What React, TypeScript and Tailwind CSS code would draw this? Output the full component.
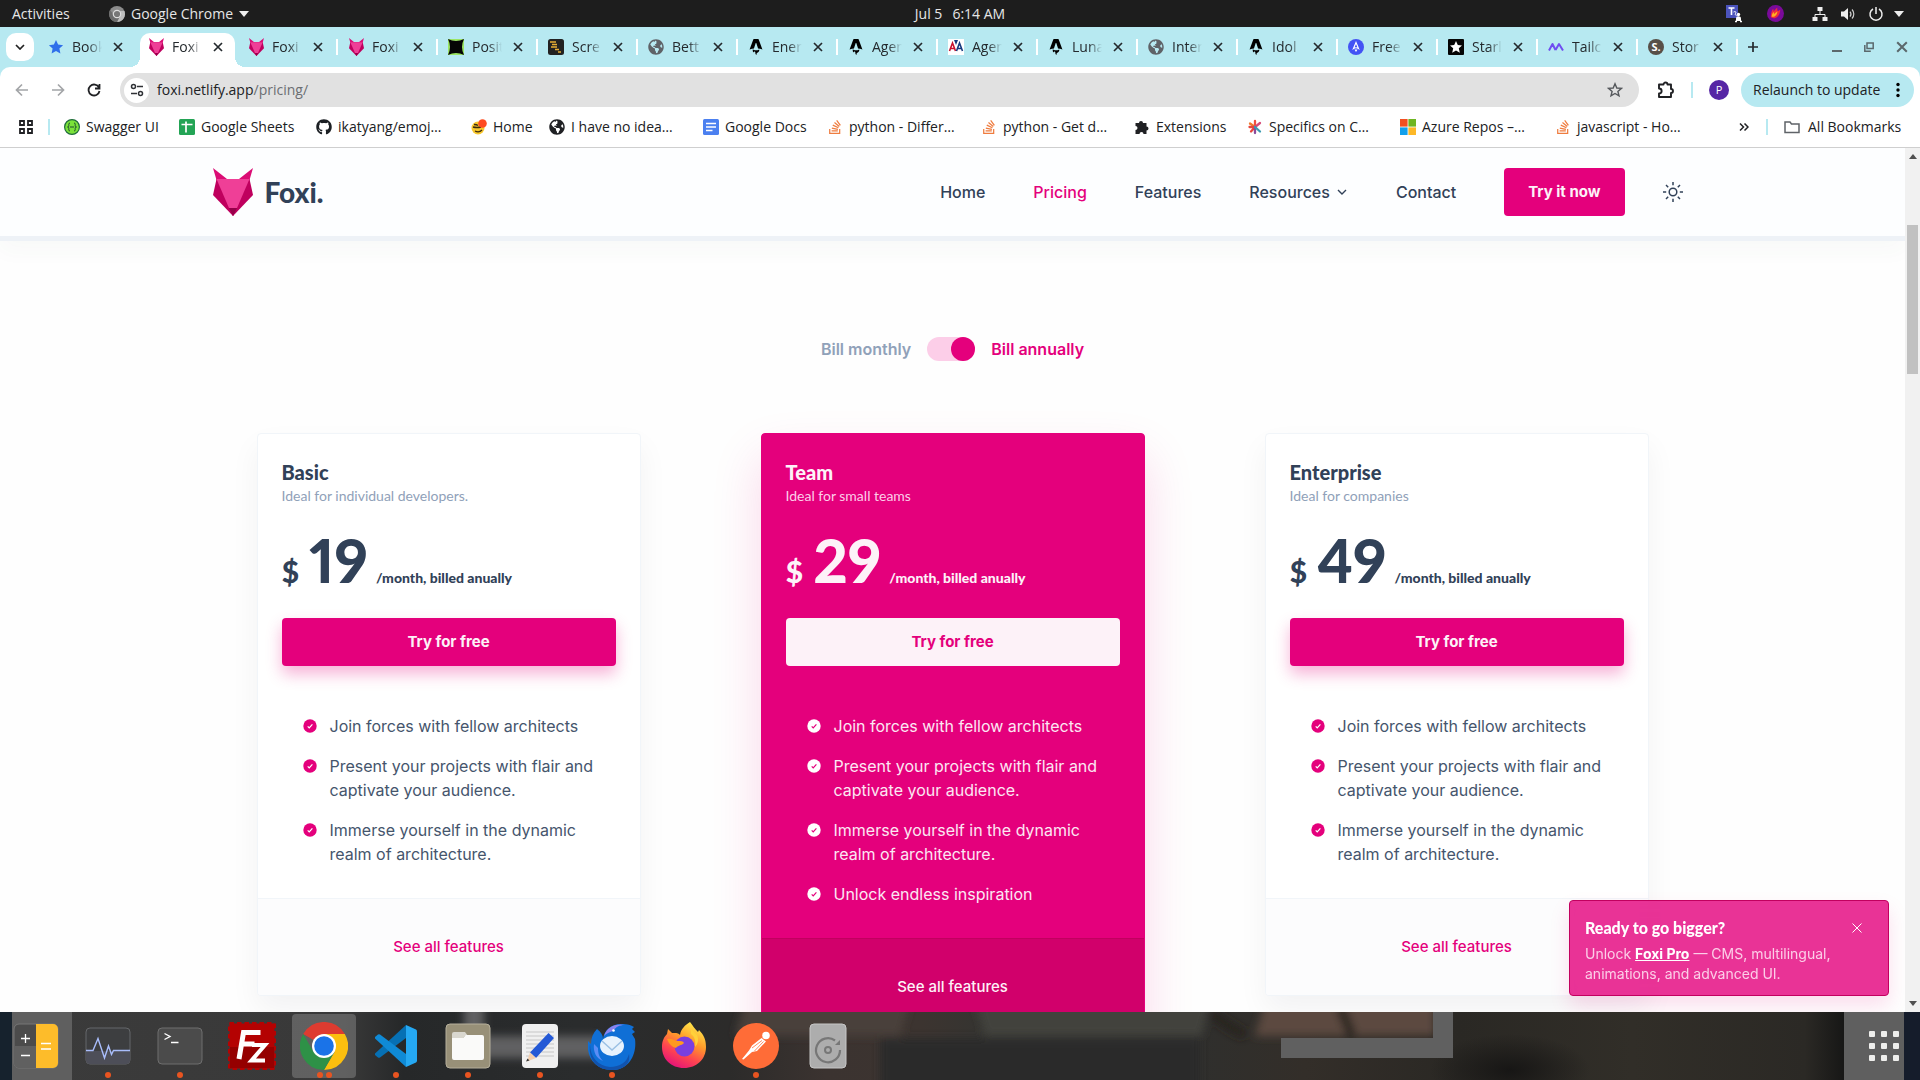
import React, { useState } from "react";
import { FaGithub, FaGlobeAmericas } from "react-icons/fa";
import { SiAstro, SiStackoverflow } from "react-icons/si";

type IconProps = { className?: string };

const headingFont = "font-['Lato',sans-serif]";

/* ---------- Brand ---------- */

function FoxLogo({ className }: IconProps) {
  return (
    <svg viewBox="0 0 40 48" className={className} aria-hidden="true">
      <path d="M0 0 L14 11 H26 L40 0 L36.500 12 L20 48 L3.500 12Z" fill="#db0d75" />
      <path d="M3.500 11 L0 27 L20 48 L40 27 L36.500 11Z" fill="#bf005e" />
      <path d="M3.500 11 H36.500 L24 40 H16Z" fill="#ef3f97" />
      <path d="M16 40 H24 L20 48Z" fill="#97004a" />
    </svg>
  );
}

/* ---------- Desktop top bar ---------- */

function TopBar() {
  return (
    <header className="grid h-[27px] shrink-0 grid-cols-3 items-center bg-[#1d1d1d] px-3 font-['Open_Sans',sans-serif] text-sm text-[#e6e6e6]">
      <div className="flex items-center">
        <button type="button" className="w-[97px] text-left">Activities</button>
        <button type="button" className="flex items-center gap-1.5 whitespace-nowrap">
          <svg viewBox="0 0 16 16" className="size-4" aria-hidden="true">
            <circle cx="8" cy="8" r="8" fill="#8c8c8c" />
            <path d="M8 5h7.400A8 8 0 0 1 8 16l3-6z" fill="#bdbdbd" />
            <path d="M5 9.500 1.200 4A8 8 0 0 0 8 16l2-4z" fill="#6c6c6c" />
            <circle cx="8" cy="8" r="3.700" fill="#777" stroke="#ddd" strokeWidth="1.200" />
          </svg>
          Google Chrome
          <svg viewBox="0 0 10 6" className="w-2.5" aria-hidden="true"><path d="M0 0h10L5 6z" fill="#eee" /></svg>
        </button>
      </div>
      <div className="flex justify-center gap-2.5">
        <span>Jul 5</span>
        <span>6:14 AM</span>
      </div>
      <div className="flex items-center justify-end">
        <svg viewBox="0 0 18 18" className="mr-6 size-[18px]" aria-hidden="true">
          <rect x="1" y="0" width="12" height="13" fill="#4b53bc" />
          <path d="M3.500 3h6M6.500 3v7" stroke="#fff" strokeWidth="1.600" fill="none" />
          <path d="M8.500 7c2-1 3 0 2 1.500s1 1.500 1 2.500" stroke="#fff" fill="none" />
          <circle cx="13.500" cy="9.500" r="1.700" fill="#fff" />
          <path d="M11 13.500c0-3 5-3 5 0v2.500h-5z" fill="#fff" />
          <path d="M10 16.500h2m3 0h2" stroke="#fff" strokeWidth="1.500" />
        </svg>
        <svg viewBox="0 0 18 18" className="mr-7 size-[17px]" aria-hidden="true">
          <circle cx="9" cy="9" r="9" fill="#7a0a9a" />
          <path d="M4 13c0-4 1-7 2.500-9 .5 1 .5 2 .5 3 1-1 2-3 4-4-.5 2 0 2.500.5 3.500L14 5c0 5-3 9-7 9z" fill="#f02a3c" />
          <path d="M5 12.500c0-2 1-4 2-5l.5 2L11 6.500c0 3-2 6-5 6z" fill="#ffb020" />
        </svg>
        <svg viewBox="0 0 16 16" className="mr-3 size-4" aria-hidden="true">
          <path d="M8 5v4M3 12V8.500h10V12" stroke="#eee" fill="none" />
          <path d="M5.500 1h5v4h-5zM.5 11h5v4h-5zM10.500 11h5v4h-5z" fill="#eee" />
        </svg>
        <svg viewBox="0 0 16 16" className="mr-3 size-4" aria-hidden="true">
          <path d="M1 5.500h3L8 2v12l-4-3.500H1z" fill="#eee" />
          <path d="M10 5.500a4 4 0 0 1 0 5M12 3.500a6.500 6.500 0 0 1 0 9" stroke="#ccc" fill="none" strokeWidth="1.200" />
        </svg>
        <svg viewBox="0 0 16 16" className="mr-2.5 size-4" aria-hidden="true">
          <path d="M5 3a6 6 0 1 0 6 0M8 1v7" stroke="#eee" fill="none" strokeWidth="1.500" />
        </svg>
        <svg viewBox="0 0 10 6" className="mr-1 w-2.5" aria-hidden="true"><path d="M0 0h10L5 6z" fill="#eee" /></svg>
      </div>
    </header>
  );
}

/* ---------- Browser tabs ---------- */

const globeIcon = <FaGlobeAmericas className="size-4 text-[#5f6368]" />;
const astroIcon = <SiAstro className="size-4 text-black" />;
const foxIcon = <FoxLogo className="h-[18px] w-[15px]" />;

const tabs: { title: string; icon: React.ReactNode }[] = [
  {
    title: "Book",
    icon: (
      <svg viewBox="0 0 16 16" className="size-4"><path d="M8 1l2.100 4.600 5 .6-3.700 3.400 1 4.900L8 12l-4.400 2.500 1-4.900L.9 6.200l5-.6z" fill="#2f6fea" /></svg>
    ),
  },
  { title: "Foxi", icon: foxIcon },
  { title: "Foxi", icon: foxIcon },
  { title: "Foxi", icon: foxIcon },
  {
    title: "Posit",
    icon: (
      <svg viewBox="0 0 16 16" className="size-4"><path d="M0 0h16v16H0z" fill="#9be564" /><path d="M0 0q8 4 16 0-4 8 0 16-8-4-16 0 4-8 0-16z" fill="#050505" /></svg>
    ),
  },
  {
    title: "Scre",
    icon: (
      <svg viewBox="0 0 16 16" className="size-4"><rect width="16" height="16" rx="2.500" fill="#222" /><path d="M2 3h6M4 5.500h5M3 8h6M7 10.500h4M10 13h3" stroke="#e5ad35" strokeWidth="1.500" /></svg>
    ),
  },
  { title: "Bett", icon: globeIcon },
  { title: "Ener", icon: astroIcon },
  { title: "Agen", icon: astroIcon },
  {
    title: "Agen",
    icon: (
      <svg viewBox="0 0 16 16" className="size-4"><path d="M0 0h16v16H0z" fill="#fff" /><path d="M1.500 12 4.500 4 7.500 12M2.500 9.500h4" stroke="#c8102e" strokeWidth="1.600" fill="none" /><path d="M8.500 12 11.500 4 14.500 12M9.500 9.500h4" stroke="#15397f" strokeWidth="1.600" fill="none" /><path d="M6 1l2 5 2-5" fill="#15397f" /></svg>
    ),
  },
  { title: "Luna", icon: astroIcon },
  { title: "Inter", icon: globeIcon },
  { title: "Idol", icon: astroIcon },
  {
    title: "Free",
    icon: (
      <svg viewBox="0 0 16 16" className="size-4"><circle cx="8" cy="8" r="8" fill="#4353f4" /><path d="M5.500 9.500 8 3.500l2.500 6Q8 8 5.500 9.500z" fill="none" stroke="#fff" strokeWidth="1.200" /><path d="M6.500 10.500h3L8 13z" fill="#fff" /></svg>
    ),
  },
  {
    title: "Starl",
    icon: (
      <svg viewBox="0 0 16 16" className="size-4"><rect width="16" height="16" rx="1" fill="#050505" /><path d="M8 2l1.800 4 4.200.4-3.200 2.900 1 4.400L8 11.500l-3.800 2.200 1-4.400L2 6.400 6.200 6z" fill="#fff" /></svg>
    ),
  },
  {
    title: "Tailc",
    icon: (
      <svg viewBox="0 0 16 16" className="size-4"><path d="M1 11.500 4.500 5l3 6M7.500 11 11 5l4 6.500" fill="none" stroke="#6f4df0" strokeWidth="2" strokeLinejoin="round" /></svg>
    ),
  },
  {
    title: "Stor",
    icon: (
      <span className="flex size-4 items-center justify-center rounded-full bg-[#574f48] text-[11px] font-bold text-white">S.</span>
    ),
  },
];

function CloseGlyph({ className }: IconProps) {
  return (
    <svg viewBox="0 0 10 10" className={className} aria-hidden="true">
      <path d="M1 1l8 8M9 1 1 9" stroke="currentColor" strokeWidth="1.700" fill="none" />
    </svg>
  );
}

function TabStrip() {
  return (
    <div className="flex h-10 shrink-0 items-end bg-[#b7e9f1] text-[#24292d]">
      <button type="button" aria-label="Search tabs" className="mr-1.5 mb-1.5 ml-1.5 flex h-7 w-7 shrink-0 items-center justify-center rounded-[10px] bg-white">
        <svg viewBox="0 0 10 6" className="w-2.5" aria-hidden="true"><path d="M1 1l4 4 4-4" stroke="#222" strokeWidth="1.700" fill="none" /></svg>
      </button>
      {tabs.map((tab, i) => {
        const active = i === 1;
        return (
          <div key={i} className="flex h-[34px] w-[100px] min-w-0 items-center">
            <div
              className={
                active
                  ? "relative flex h-[34px] w-[95px] items-center rounded-t-[10px] bg-white pb-1.5 pl-2"
                  : "flex h-[34px] w-[95px] items-center pb-1.5 pl-2"
              }
            >
              {active && (
                <>
                  <span className="absolute bottom-0 -left-2.5 size-2.5 bg-[radial-gradient(circle_at_0_0,transparent_10px,white_10px)]" />
                  <span className="absolute -right-2.5 bottom-0 size-2.5 bg-[radial-gradient(circle_at_100%_0,transparent_10px,white_10px)]" />
                </>
              )}
              <span className="flex w-4 shrink-0 justify-center">{tab.icon}</span>
              <span className="ml-2 w-[30px] overflow-hidden text-sm whitespace-nowrap [mask-image:linear-gradient(to_right,black_55%,transparent)]">{tab.title}</span>
              <button type="button" aria-label="Close tab" className="ml-[11px]">
                <CloseGlyph className="size-2.5" />
              </button>
            </div>
            {i > 1 && <span className="mb-1.5 ml-px h-4 w-0.5 bg-white" />}
          </div>
        );
      })}
      <button type="button" aria-label="New tab" className="mb-3.5 ml-[7px]">
        <svg viewBox="0 0 12 12" className="size-3" aria-hidden="true"><path d="M6 1v10M1 6h10" stroke="#24292d" strokeWidth="1.700" /></svg>
      </button>
      <div className="mr-3 mb-3.5 ml-auto flex items-center gap-[22px] text-[#5b686c]">
        <button type="button" aria-label="Minimize">
          <svg viewBox="0 0 10 10" className="size-2.5"><path d="M0 9h10" stroke="currentColor" strokeWidth="2" /></svg>
        </button>
        <button type="button" aria-label="Restore">
          <svg viewBox="0 0 10 10" className="size-2.5" fill="none" stroke="currentColor" strokeWidth="1.500"><path d="M3 1h6.200v5.500H3z" /><path d="M.8 3v6.200h6" /></svg>
        </button>
        <button type="button" aria-label="Close window"><CloseGlyph className="size-3" /></button>
      </div>
    </div>
  );
}

/* ---------- Address bar ---------- */

function Toolbar() {
  return (
    <div className="bg-[#b7e9f1]">
      <div className="flex h-[46px] items-center rounded-t-[10px] bg-white pr-1.5 pl-[15px] text-sm text-[#202124]">
        <button type="button" aria-label="Back" className="mr-[22px]">
          <svg viewBox="0 0 14 14" className="size-3.5"><path d="M13 7H2M7 1.500 1.500 7 7 12.500" fill="none" stroke="#a3a5a8" strokeWidth="1.700" /></svg>
        </button>
        <button type="button" aria-label="Forward" className="mr-[22px]">
          <svg viewBox="0 0 14 14" className="size-3.5"><path d="M1 7h11M7 1.500 12.500 7 7 12.500" fill="none" stroke="#a3a5a8" strokeWidth="1.700" /></svg>
        </button>
        <button type="button" aria-label="Reload" className="mr-[19px]">
          <svg viewBox="0 0 14 14" className="size-3.5"><path d="M12 4.500A5.500 5.500 0 1 0 12.500 8M12.500 1v4.500H8" fill="none" stroke="#202124" strokeWidth="1.800" /></svg>
        </button>
        <div className="flex h-[34px] flex-1 items-center rounded-full bg-[#e1e1e1] pr-4 pl-1">
          <button type="button" aria-label="View site information" className="flex size-[25px] items-center justify-center rounded-full bg-white">
            <svg viewBox="0 0 14 14" className="size-3.5" fill="none" stroke="#303236" strokeWidth="1.500">
              <circle cx="3.500" cy="3.500" r="2" /><path d="M7 3.500h6M1 10.500h6" /><circle cx="10.500" cy="10.500" r="2" />
            </svg>
          </button>
          <div className="relative ml-2 flex-1">
            <input aria-label="Address" defaultValue="foxi.netlify.app/pricing/" className="w-full bg-transparent text-transparent outline-none" />
            <span aria-hidden="true" className="pointer-events-none absolute inset-0">
              foxi.netlify.app<span className="text-[#6b6e72]">/pricing/</span>
            </span>
          </div>
          <button type="button" aria-label="Bookmark this page">
            <svg viewBox="0 0 16 16" className="size-4"><path d="M8 1.800l1.800 4.200 4.600.4-3.500 3 1.100 4.500L8 11.500l-4 2.400 1.100-4.500-3.500-3L6.200 6z" fill="none" stroke="#55585c" strokeWidth="1.400" /></svg>
          </button>
        </div>
        <button type="button" aria-label="Extensions" className="ml-[18px]">
          <svg viewBox="0 0 18 18" className="size-[18px]"><path d="M2 3.500h4.500a2 2 0 0 1 4 0H14v4.500a2 2 0 0 1 0 4V16H2v-3.500c3.500 0 3.500-5 0-5z" fill="none" stroke="#202124" strokeWidth="1.900" strokeLinejoin="round" /></svg>
        </button>
        <span className="ml-4 h-4 w-0.5 bg-[#b7e9f1]" />
        <button type="button" aria-label="Profile" className="ml-4 flex size-5 items-center justify-center rounded-full bg-[#5626a5] text-[11px] text-white">P</button>
        <button type="button" className="ml-3 flex h-[34px] w-[173px] items-center justify-between rounded-full bg-[#b7e9f1] pr-3.5 pl-3 whitespace-nowrap">
          Relaunch to update
          <svg viewBox="0 0 4 16" className="h-4 w-1"><circle cx="2" cy="2.500" r="1.700" /><circle cx="2" cy="8" r="1.700" /><circle cx="2" cy="13.500" r="1.700" /></svg>
        </button>
      </div>
    </div>
  );
}

/* ---------- Bookmarks ---------- */

const stackIcon = <SiStackoverflow className="size-3.5 text-[#ef7c3f]" />;

const bookmarks: { label: string; width: string; icon: React.ReactNode }[] = [
  {
    label: "Swagger UI",
    width: "w-[115px]",
    icon: (
      <svg viewBox="0 0 16 16" className="size-4"><circle cx="8" cy="8" r="7.400" fill="#7be23a" stroke="#1f6b3c" strokeWidth="1.200" /><path d="M6 4c-1.500 0-1.200 1.500-1.200 2.500S4.500 8 3.500 8c1 0 1.300.5 1.300 1.500S4.500 12 6 12M10 4c1.500 0 1.200 1.500 1.200 2.500s.3 1.500 1.300 1.500c-1 0-1.300.5-1.300 1.500S11.500 12 10 12M6 8h4" fill="none" stroke="#1d4a31" /></svg>
    ),
  },
  {
    label: "Google Sheets",
    width: "w-[137px]",
    icon: (
      <svg viewBox="0 0 16 16" className="size-4"><rect width="16" height="16" rx="1.500" fill="#23a455" /><path d="M2.500 5.500h11M7 2.500v11" stroke="#fff" strokeWidth="1.700" /></svg>
    ),
  },
  { label: "ikatyang/emoj…", width: "w-[155px]", icon: <FaGithub className="size-4 text-[#1b1f23]" /> },
  {
    label: "Home",
    width: "w-[78px]",
    icon: (
      <svg viewBox="0 0 16 16" className="size-4"><circle cx="7" cy="9" r="6.500" fill="#f7c72c" /><path d="M2 8q4 1 8 0M4 12q4 2 7-1M3 5.500q3 0 4 1" stroke="#3a2a10" strokeWidth="1.300" fill="none" /><circle cx="11.500" cy="4.500" r="4.300" fill="#ff4b1f" /></svg>
    ),
  },
  { label: "I have no idea…", width: "w-[154px]", icon: <FaGlobeAmericas className="size-4 text-[#202124]" /> },
  {
    label: "Google Docs",
    width: "w-[124px]",
    icon: (
      <svg viewBox="0 0 16 16" className="size-4"><rect width="16" height="16" rx="1.500" fill="#4b80f0" /><path d="M3 4.500h10M3 8h10M3 11.500h6.500" stroke="#fff" strokeWidth="1.500" /></svg>
    ),
  },
  { label: "python - Differ…", width: "w-[154px]", icon: stackIcon },
  { label: "python - Get d…", width: "w-[153px]", icon: stackIcon },
  {
    label: "Extensions",
    width: "w-[113px]",
    icon: (
      <svg viewBox="0 0 16 16" className="size-4"><path d="M1.500 4H5a2 2 0 1 1 4 0h3.500v3.500a2 2 0 1 1 0 4V15H9.500a2 2 0 1 0-4 0h-4v-4a2 2 0 1 0 0-4z" fill="#202124" /></svg>
    ),
  },
  {
    label: "Specifics on C…",
    width: "w-[153px]",
    icon: (
      <svg viewBox="0 0 16 16" className="size-4" strokeWidth="2.300" strokeLinecap="round"><path d="M8 8V2" stroke="#f04e3e" /><path d="M8 8 3 4.500" stroke="#f07a2e" /><path d="M8 8H2.500M8 8l-4 4.500" stroke="#e8463c" /><path d="M8 8l5-4" stroke="#d64a78" /><path d="M8 8v6" stroke="#8a4a9a" /><path d="M8 8l5 4.500" stroke="#3a9ab0" /></svg>
    ),
  },
  {
    label: "Azure Repos –…",
    width: "w-[155px]",
    icon: (
      <svg viewBox="0 0 16 16" className="size-4"><path d="M0 0h7.600v7.600H0z" fill="#f25022" /><path d="M8.400 0H16v7.600H8.400z" fill="#6fb522" /><path d="M0 8.400h7.600V16H0z" fill="#12a0ec" /><path d="M8.400 8.400H16V16H8.400z" fill="#fdb827" /></svg>
    ),
  },
  { label: "javascript - Ho…", width: "w-[154px]", icon: stackIcon },
];

function BookmarksBar() {
  return (
    <nav aria-label="Bookmarks" className="flex h-[35px] shrink-0 items-center border-b border-[#cfcfcf] bg-white pb-1.5 pr-3.5 pl-[19px] text-sm text-[#202124]">
      <svg viewBox="0 0 14 14" className="size-3.5" fill="none" stroke="#202124" strokeWidth="1.800"><path d="M1 1h4v4H1zM9 1h4v4H9zM1 9h4v4H1zM9 9h4v4H9z" /></svg>
      <span className="mr-3.5 ml-[15px] h-4 w-0.5 bg-[#b7e9f1]" />
      <div className="flex min-w-0 flex-1 overflow-hidden">
        {bookmarks.map((b) => (
          <a key={b.label} href="#" className={`flex shrink-0 items-center gap-1.5 whitespace-nowrap ${b.width}`}>
            <span className="flex w-4 shrink-0 justify-center">{b.icon}</span>
            {b.label}
          </a>
        ))}
      </div>
      <button type="button" aria-label="More bookmarks" className="mr-[17px]">
        <svg viewBox="0 0 10 8" className="h-2 w-2.5"><path d="M1 .5 4.500 4 1 7.500M5.500.5 9 4 5.500 7.500" fill="none" stroke="#202124" strokeWidth="1.500" /></svg>
      </button>
      <span className="mr-4 h-4 w-0.5 bg-[#b7e9f1]" />
      <button type="button" className="flex w-[122px] items-center gap-2 whitespace-nowrap">
        <svg viewBox="0 0 16 14" className="h-3.5 w-4"><path d="M1 2h5l1.500 2H15v8.500H1z" fill="none" stroke="#5f6368" strokeWidth="1.500" /></svg>
        All Bookmarks
      </button>
    </nav>
  );
}

/* ---------- Site ---------- */

function SiteNav() {
  return (
    <header className="relative z-10 border-b-[5px] border-[#eef2f7] bg-[#fdfeff] shadow-[0_10px_20px_rgba(51,85,70,0.03)]">
      <div className="mx-auto flex h-[88px] max-w-[1480px] items-center">
        <a href="#" className="flex items-center gap-3">
          <FoxLogo className="h-12 w-10" />
          <span className={`${headingFont} text-[28px] font-black text-slate-700`}>Foxi.</span>
        </a>
        <nav aria-label="Main" className="ml-auto flex items-center gap-12 text-base font-medium text-slate-700">
          <a href="#">Home</a>
          <a href="#" className="text-[#e4007c]">Pricing</a>
          <a href="#">Features</a>
          <button type="button" className="flex items-center gap-1.5">
            Resources
            <svg viewBox="0 0 12 12" className="size-3"><path d="M2 4l4 4 4-4" fill="none" stroke="currentColor" strokeWidth="1.400" /></svg>
          </button>
          <a href="#">Contact</a>
          <button type="button" className="h-12 rounded bg-[#e4007c] px-6 text-[15px] font-bold text-pink-50">Try it now</button>
        </nav>
        <button type="button" aria-label="Toggle theme" className="ml-7 p-2.5 text-slate-700">
          <svg viewBox="0 0 20 20" className="size-5" fill="none" stroke="currentColor" strokeWidth="1.500">
            <circle cx="10" cy="10" r="3.800" />
            <path d="M10 0v3.200M10 16.800V20M0 10h3.200M16.800 10H20M3 3l2.200 2.200M14.800 14.800 17 17M17 3l-2.200 2.200M5.200 14.800 3 17" />
          </svg>
        </button>
      </div>
    </header>
  );
}

function BillingToggle() {
  const [annual, setAnnual] = useState(true);
  return (
    <div className="flex items-center justify-center text-base font-semibold">
      <span className={annual ? "text-slate-400" : "text-[#e4007c]"}>Bill monthly</span>
      <label className="relative mx-4 h-6 w-12 cursor-pointer rounded-full bg-pink-200">
        <input type="checkbox" aria-label="Bill annually" checked={annual} onChange={(e) => setAnnual(e.target.checked)} className="peer sr-only" />
        <span className="absolute top-0 left-0 size-6 rounded-full bg-[#e4007c] peer-checked:left-6" />
      </label>
      <span className={annual ? "text-[#e4007c]" : "text-slate-400"}>Bill annually</span>
    </div>
  );
}

type Plan = { name: string; tagline: string; price: number; featured?: boolean; features: string[] };

const sharedFeatures = [
  "Join forces with fellow architects",
  "Present your projects with flair and captivate your audience.",
  "Immerse yourself in the dynamic realm of architecture.",
];

const plans: Plan[] = [
  { name: "Basic", tagline: "Ideal for individual developers.", price: 19, features: sharedFeatures },
  { name: "Team", tagline: "Ideal for small teams", price: 29, featured: true, features: [...sharedFeatures, "Unlock endless inspiration"] },
  { name: "Enterprise", tagline: "Ideal for companies", price: 49, features: sharedFeatures },
];

function PlanCard({ plan }: { plan: Plan }) {
  const f = plan.featured;
  return (
    <article
      className={
        f
          ? "overflow-clip rounded border border-[#e4007c] bg-[#e4007c] text-pink-50 shadow-[0_25px_50px_rgba(228,0,124,0.16)]"
          : "overflow-clip rounded border border-slate-100 bg-white text-slate-700 shadow-[0_14px_30px_rgba(15,23,42,0.05)]"
      }
    >
      <div className="px-6 pt-6 pb-8">
        <div className={headingFont}>
          <h2 className="text-xl leading-7 font-black">{plan.name}</h2>
          <p className={f ? "text-sm text-pink-200" : "text-sm text-slate-400"}>{plan.tagline}</p>
          <p className="mt-6 flex h-[60px] items-baseline font-black proportional-nums">
            <span className="text-[30px]">$</span>
            <span className="ml-2.5 text-[60px] leading-[60px]">{plan.price}</span>
            <span className="ml-2 text-sm">/month, billed anually</span>
          </p>
        </div>
        <button
          type="button"
          className={
            f
              ? "mt-7 h-12 w-full rounded bg-[#fdf2f8] text-[15px] font-bold text-[#e4007c]"
              : "mt-7 h-12 w-full rounded bg-[#e4007c] text-[15px] font-bold text-pink-50 shadow-[0_8px_16px_rgba(228,0,124,0.3)]"
          }
        >
          Try for free
        </button>
        <ul className="mt-12 space-y-4 pl-[21px] text-base">
          {plan.features.map((text) => (
            <li key={text} className="flex gap-[13px]">
              <svg viewBox="0 0 14 14" className="mt-[5px] size-3.5 shrink-0" aria-hidden="true">
                <circle cx="7" cy="7" r="6.700" fill={f ? "#fff" : "#e4007c"} />
                <path d="M4.700 7.400l1.500 1.500 3.200-3.600" fill="none" stroke={f ? "#e4007c" : "#fff"} strokeWidth="1.200" />
              </svg>
              <span className={f ? "text-pink-100" : "text-slate-600"}>{text}</span>
            </li>
          ))}
        </ul>
      </div>
      <div className={f ? "flex h-[97px] items-center justify-center border-t border-[#c2005f] bg-[#d1006b]" : "flex h-[97px] items-center justify-center border-t border-slate-100 bg-[#fcfcfd]"}>
        <a href="#" className={f ? "text-[15px] font-medium" : "text-[15px] font-medium text-[#e4007c]"}>See all features</a>
      </div>
    </article>
  );
}

function Toast() {
  return (
    <aside className="absolute right-4 bottom-4 z-20 w-80 rounded border border-[#c2005f] bg-[#e4007c]/80 px-[15px] pt-[13px] pb-[11px] text-sm text-pink-200 shadow-[0_10px_20px_rgba(228,0,124,0.13)] backdrop-blur">
      <div className="flex items-center justify-between pr-[11px]">
        <h3 className={`${headingFont} text-base leading-7 font-black text-white`}>Ready to go bigger?</h3>
        <button type="button" aria-label="Dismiss" className="text-white">
          <svg viewBox="0 0 10 10" className="size-2.5"><path d="M.5.5l9 9M9.500.5l-9 9" stroke="currentColor" fill="none" /></svg>
        </button>
      </div>
      <p className="mt-0.5">
        Unlock <a href="#" className="font-bold text-white underline">Foxi Pro</a> — CMS, multilingual, animations, and advanced UI.
      </p>
    </aside>
  );
}

function Scrollbar() {
  return (
    <div aria-hidden="true" className="flex w-[15px] shrink-0 flex-col items-center bg-[#f1f1f1] py-1.5">
      <svg viewBox="0 0 8 5" className="w-2"><path d="M0 5h8L4 0z" fill="#505050" /></svg>
      <div className="mt-[66px] h-[149px] w-[11px] bg-[#c1c1c1]" />
      <svg viewBox="0 0 8 5" className="mt-auto w-2"><path d="M0 0h8L4 5z" fill="#505050" /></svg>
    </div>
  );
}

/* ---------- Dock ---------- */

const dockIcons: { name: string; dots: number; art: React.ReactNode }[] = [
  {
    name: "Calculator",
    dots: 0,
    art: (
      <>
        <rect x="2" y="2" width="44" height="44" rx="5" fill="#4b4b4b" stroke="#777" />
        <path d="M2 24h22v22H7a5 5 0 0 1-5-5z" fill="#606060" />
        <path d="M24 2h17a5 5 0 0 1 5 5v34a5 5 0 0 1-5 5H24z" fill="#fdbc2a" />
        <path d="M9 16.500h9M13.500 12v9M9 33.500h9M29 21.500h10M29 27h10" stroke="#fff" strokeWidth="1.300" />
      </>
    ),
  },
  {
    name: "System Monitor",
    dots: 1,
    art: (
      <>
        <rect x="2" y="6" width="44" height="36" rx="4" fill="#3d3e40" stroke="#65676a" />
        <path d="M2.500 29H29l17 0v9a4 4 0 0 1-4 4H6a4 4 0 0 1-4-4z" fill="#4d4e58" />
        <path d="M2 28.500h7l5-12 6.500 19.500 4-12 3 8.500 2-4H46" fill="none" stroke="#a9bdfb" strokeWidth="1.400" />
      </>
    ),
  },
  {
    name: "Terminal",
    dots: 1,
    art: (
      <>
        <rect x="2" y="6" width="44" height="36" rx="4" fill="#4b4b4b" stroke="#6e6e6e" />
        <path d="M8.500 11.500l5.500 3-5.500 3M15 20.500h7.500" fill="none" stroke="#fff" strokeWidth="1.400" />
      </>
    ),
  },
  {
    name: "FileZilla",
    dots: 0,
    art: (
      <>
        <rect x="1.500" y="1.500" width="45" height="45" fill="#b40202" stroke="#b40202" strokeWidth="3" strokeDasharray="4.500 3" />
        <path d="M2 25h44v21H2z" fill="#950000" />
        <path d="M11 37 15.500 10.500h17M13.500 22h13" fill="none" stroke="#fff" strokeWidth="5" />
        <path d="M24 23h13L23.500 38.500H37" fill="none" stroke="#fff" strokeWidth="4" />
      </>
    ),
  },
  {
    name: "Google Chrome",
    dots: 2,
    art: (
      <>
        <path d="M24 24 3.200 12A24 24 0 0 1 44.800 12z" fill="#de3b30" />
        <path d="M24 12h20.800A24 24 0 0 1 24 48l10.400-18z" fill="#fbbf0f" />
        <path d="M13.600 30 3.200 12A24 24 0 0 0 24 48l10.400-18z" fill="#2e9147" />
        <circle cx="24" cy="24" r="12" fill="#fff" />
        <circle cx="24" cy="24" r="9.800" fill="#1a73e8" />
      </>
    ),
  },
  {
    name: "Visual Studio Code",
    dots: 1,
    art: (
      <>
        <path d="M3 31.500 34 3v13L8 35.500q-1 .5-2 0L3 33z" fill="#0670b4" />
        <path d="M3 16.500 34 45V32L8 12.500q-1-.5-2 0L3 15z" fill="#0f8ad6" />
        <path d="M34 3 44 7.500q1 .5 1 2v29q0 1.500-1 2L34 45z" fill="#25a8f2" />
      </>
    ),
  },
  {
    name: "Files",
    dots: 1,
    art: (
      <>
        <rect x="2" y="2" width="44" height="44" rx="4" fill="#989078" stroke="#b6af9b" />
        <path d="M8 12q0-2 2-2h11l3 4h-3l-3 3H8z" fill="#d9d7cf" />
        <path d="M8 16h11l3-3h16q2 0 2 2v21q0 2-2 2H10q-2 0-2-2z" fill="#fafaf9" />
      </>
    ),
  },
  {
    name: "Text Editor",
    dots: 1,
    art: (
      <>
        <rect x="6" y="2" width="36" height="44" rx="4" fill="#f0f0f0" />
        <path d="M10 10h28M10 14h28M10 18h28M10 22h28M10 26h28M10 30h28M10 34h28" stroke="#c6c6c6" />
        <path d="M32.500 11l5.500 5-18 20-6-5.500z" fill="#2459d6" />
        <path d="M14 30.500l6 5.500-9 3.500z" fill="#f3cfae" />
        <path d="M11.500 36.500l2 2-3.500 1z" fill="#333" />
      </>
    ),
  },
  {
    name: "Thunderbird",
    dots: 1,
    art: (
      <>
        <path d="M9 7c4 3 6 6 6 10 1-9 9-16 20-15 4 0 8 1 11 3l-2 2 3 3-3 2 3 5c2 14-5 31-23 31S-2 34 0 19l3 3c0-6 2-11 6-15z" fill="#0f6fd6" />
        <path d="M2 22c0 13 8 22 20 23 10 0 17-5 19-13 2 10-6 16-17 16C9 48 0 38 2 22z" fill="#1253ad" />
        <path d="M16 14C19 5 27 1 37 3c-6 0-9 2-12 6-3 1-6 2-9 5z" fill="#8b83ee" />
        <path d="M6 22c-1 8 2 14 9 17-4-4-5-8-5-13z" fill="#5b8df5" />
        <ellipse cx="24" cy="24" rx="12" ry="10" fill="#e7f2fd" />
        <path d="M14 19l10 9 10-9" fill="none" stroke="#9bc0e4" strokeWidth="1.500" />
        <circle cx="25.500" cy="8.500" r="1.300" fill="#fff" />
      </>
    ),
  },
  {
    name: "Firefox",
    dots: 0,
    art: (
      <>
        <defs>
          <linearGradient id="ff" x1="0.800" y1="0" x2="0.300" y2="1">
            <stop offset="0" stopColor="#fff44f" /><stop offset="0.400" stopColor="#ff9a2a" /><stop offset="0.700" stopColor="#ff4550" /><stop offset="1" stopColor="#e3127a" />
          </linearGradient>
        </defs>
        <path d="M30 0c3 4 5 7 8 10l1-2c5 5 7 10 7 17 0 12-9 21-22 21S2 37 2 25c0-6 2-10 5-13l1-5 4 4c5 0 6 0 8 2 1-6 5-10 10-13z" fill="url(#ff)" />
        <circle cx="24.500" cy="24.500" r="10" fill="#7a3fe0" />
        <path d="M7 17c5-1 7 2 10 2 4 0 6 0 7 2-3 3-6 2-8 5-4-1-7-4-9-9z" fill="#ff9a1f" />
        <path d="M31 12c4 3 5 8 4 13 3-3 4-8 2-12l-6-6z" fill="#ffd13a" />
      </>
    ),
  },
  {
    name: "Postman",
    dots: 1,
    art: (
      <>
        <circle cx="24" cy="24" r="23" fill="#ff6c37" />
        <circle cx="34" cy="13.500" r="3.800" fill="#fff" />
        <path d="M29.500 16l4.500 3.500-9 9.500-5 1-8.500 7.500L10 37l7-8.500 3-5z" fill="#fff" />
        <path d="M20 26l10-7.500M22.500 29l9-9.500" stroke="#ff6c37" strokeWidth="0.800" />
      </>
    ),
  },
  {
    name: "Disks",
    dots: 0,
    art: (
      <>
        <rect x="6" y="2" width="36" height="44" rx="4" fill="#adadad" stroke="#c6c6c6" />
        <path d="M31 18.500A12 12 0 1 0 36 28" fill="none" stroke="#777" strokeWidth="2.200" />
        <path d="M31 23l5-5v5z" fill="#777" />
        <circle cx="24" cy="28" r="3" fill="none" stroke="#777" strokeWidth="2" />
      </>
    ),
  },
];

function DockBackdrop() {
  return (
    <svg viewBox="0 0 1920 68" preserveAspectRatio="none" className="absolute inset-0 h-full w-full" aria-hidden="true">
      <defs>
        <linearGradient id="wall">
          <stop offset="0" stopColor="#3b3b3b" /><stop offset="0.180" stopColor="#393939" /><stop offset="0.210" stopColor="#262829" /><stop offset="0.300" stopColor="#2a2c2d" /><stop offset="0.380" stopColor="#2c2b2a" /><stop offset="0.430" stopColor="#3b3330" /><stop offset="0.480" stopColor="#3c3430" /><stop offset="0.520" stopColor="#333431" /><stop offset="0.620" stopColor="#2f2f2d" /><stop offset="0.680" stopColor="#332e29" /><stop offset="0.760" stopColor="#2a2824" /><stop offset="0.850" stopColor="#312e28" /><stop offset="0.940" stopColor="#2b2925" /><stop offset="0.960" stopColor="#171716" />
        </linearGradient>
        <radialGradient id="shade">
          <stop offset="0" stopColor="#171615" /><stop offset="1" stopColor="#171615" stopOpacity="0" />
        </radialGradient>
        <filter id="soft" filterUnits="userSpaceOnUse" x="0" y="-30" width="1920" height="130"><feGaussianBlur stdDeviation="4" /></filter>
      </defs>
      <path d="M0 0h1920v68H0z" fill="url(#wall)" />
      <g filter="url(#soft)" fill="none">
        <path d="M745-10h165l-10 34H735z" fill="#4a403b" />
        <path d="M975-10h235l-8 34H985z" fill="#42433c" />
        <path d="M880 26h320v60H880z" fill="#2a2a29" />
        <path d="M1265-10h170v34h-180z" fill="#5b4a3f" />
        <path d="M1210 0q25 20 35 22M1340-6l12 30" stroke="#26221f" strokeWidth="9" />
        <path d="M464-10h20v34h-20zM464 24h136v22H464z" fill="#606162" />
      </g>
      <ellipse cx="1510" cy="58" rx="80" ry="36" fill="url(#shade)" />
      <path d="M1433 0h20v46h-172V26h152z" fill="#606060" />
      <path d="M12 0h60v68H12zM1844 0h60v68h-60z" fill="#5f5f5f" />
      <path d="M0 0h12v68H0z" fill="#16222d" />
      <path d="M1904 0h16v68h-16z" fill="#151c2b" />
    </svg>
  );
}

function Dock() {
  return (
    <footer className="relative flex h-[68px] shrink-0 items-center justify-between overflow-hidden">
      <DockBackdrop />
      <div className="relative flex gap-2 pl-1">
        {dockIcons.map((item) => (
          <button
            key={item.name}
            type="button"
            aria-label={item.name}
            className={item.dots === 2 ? "relative size-16 rounded bg-white/20 p-2" : "relative size-16 p-2"}
          >
            <svg viewBox="0 0 48 48" className="size-12">{item.art}</svg>
            <span className="absolute inset-x-0 bottom-0 flex justify-center gap-[3px]">
              {Array.from({ length: item.dots }, (_, i) => (
                <span key={i} className="size-1.5 rounded-full bg-[#e95420]" />
              ))}
            </span>
          </button>
        ))}
      </div>
      <button type="button" aria-label="Show Applications" className="relative mr-[21px] grid grid-cols-3 gap-1.5">
        {Array.from({ length: 9 }, (_, i) => (
          <span key={i} className="size-1.5 rounded-[1px] bg-[#eeeeec]" />
        ))}
      </button>
    </footer>
  );
}

export default function App() {
  return (
    <div className="flex h-screen flex-col overflow-hidden">
      <TopBar />
      <div className="shrink-0 font-['Open_Sans',sans-serif]">
        <TabStrip />
        <Toolbar />
        <BookmarksBar />
      </div>
      <div className="flex min-h-0 flex-1">
        <div className="relative min-w-0 flex-1 overflow-hidden bg-[#fefefe] font-['Inter',sans-serif]">
          <SiteNav />
          <main className="px-8 pt-24">
            <BillingToggle />
            <section aria-label="Plans" className="mx-auto mt-[72px] grid max-w-[1392px] grid-cols-3 items-start gap-[120px]">
              {plans.map((plan) => (
                <PlanCard key={plan.name} plan={plan} />
              ))}
            </section>
          </main>
          <Toast />
        </div>
        <Scrollbar />
      </div>
      <Dock />
    </div>
  );
}
